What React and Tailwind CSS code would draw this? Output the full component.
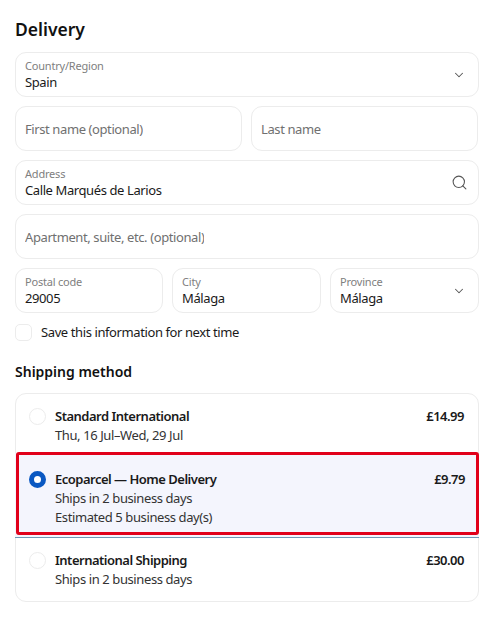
import React from 'react'
import { ChevronDown, Search } from 'lucide-react'

function Field({ label, value, placeholder, icon, className = '' }) {
  return (
    <div className={'h-[45px] min-w-0 rounded-[11px] border border-[#ececec] bg-white pl-[9px] pr-[12px] flex items-center justify-between ' + className}>
      {placeholder ? (
        <div className="text-[13px] leading-[20px] mt-[1px] tracking-[-0.4px] text-[#707070] truncate">{placeholder}</div>
      ) : (
        <div className="min-w-0">
          <div className="text-[11px] leading-[15px] tracking-[-0.2px] text-[#808080]">{label}</div>
          <div className="text-[13px] leading-[18px] tracking-[-0.4px] text-[#1a1a1a] truncate">{value}</div>
        </div>
      )}
      {icon === 'chevron' && <ChevronDown className="w-[14px] h-[14px] text-[#555] shrink-0" strokeWidth={1.75} />}
      {icon === 'search' && <Search className="w-[17px] h-[17px] text-[#555] shrink-0 -mr-[2px]" strokeWidth={1.5} />}
    </div>
  )
}

function ShipRow({ name, lines, price, selected }) {
  return (
    <div className={'relative flex items-start pr-[14px] ' + (selected ? 'h-[85px] pt-[17px] pl-[14px] bg-[#f4f5fd] border-b border-[#6f97b5] -mx-px' : 'pt-[13px] pl-[13px]')}>
      <div className={'w-[17px] h-[17px] rounded-full shrink-0 mt-[1px] ' + (selected ? 'border-[5px] border-[#0a58c2] bg-white' : 'border border-[#ececec] bg-white')} />
      <div className="ml-[9px] flex-1">
        <div className="text-[13px] leading-[19px] tracking-[-0.5px] font-semibold text-[#1a1a1a]">{name}</div>
        {lines.map(l => (
          <div key={l} className="text-[13px] leading-[18.5px] tracking-[-0.4px] text-[#333]">{l}</div>
        ))}
      </div>
      <div className="text-[13px] leading-[19px] tracking-[-0.5px] font-semibold text-[#1a1a1a]">{price}</div>
      {selected && <div className="absolute left-[1px] right-0 top-[-1px] bottom-[2px] rounded-[3px] border-[3px] border-[#e1001a] pointer-events-none" />}
    </div>
  )
}

export default function App() {
  return (
    <div className="w-[500px] h-[624px] bg-white pl-[15px] pr-[21px] pt-[17px] font-['Noto_Sans',sans-serif] overflow-hidden">
      <h1 className="text-[17.5px] leading-[24px] font-semibold text-[#111]">Delivery</h1>

      <div className="mt-[11px] flex flex-col gap-[9px]">
        <Field label="Country/Region" value="Spain" icon="chevron" />
        <div className="grid grid-cols-[227px_1fr] gap-[9px] pr-px">
          <Field placeholder="First name (optional)" />
          <Field placeholder="Last name" />
        </div>
        <Field label="Address" value="Calle Marqués de Larios" icon="search" />
        <Field placeholder="Apartment, suite, etc. (optional)" />
        <div className="grid grid-cols-[148px_149px_149px] gap-[9px]">
          <Field label="Postal code" value="29005" />
          <Field label="City" value="Málaga" />
          <Field label="Province" value="Málaga" icon="chevron" />
        </div>
      </div>

      <div className="mt-[10px] flex items-center">
        <div className="w-[17px] h-[17px] rounded-[5px] border border-[#ececec] bg-white" />
        <span className="ml-[9px] text-[13px] leading-[18px] tracking-[-0.4px] text-[#1a1a1a]">Save this information for next time</span>
      </div>

      <h2 className="mt-[21px] text-[14px] leading-[20px] font-semibold text-[#111]">Shipping method</h2>

      <div className="mt-[11px] h-[209px] rounded-[11px] border border-[#ececec] bg-white">
        <div className="h-[59px]">
          <ShipRow name="Standard International" lines={['Thu, 16 Jul–Wed, 29 Jul']} price="£14.99" />
        </div>
        <ShipRow selected name="Ecoparcel — Home Delivery" lines={['Ships in 2 business days', 'Estimated 5 business day(s)']} price="£9.79" />
        <ShipRow name="International Shipping" lines={['Ships in 2 business days']} price="£30.00" />
      </div>
    </div>
  )
}
